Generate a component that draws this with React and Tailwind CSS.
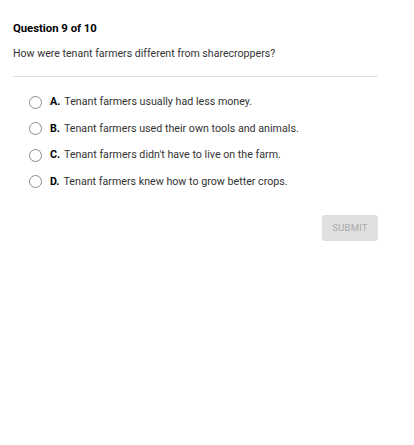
import React from "react";

const options = [
    { letter: "A.", text: "Tenant farmers usually had less money." },
    { letter: "B.", text: "Tenant farmers used their own tools and animals." },
    { letter: "C.", text: "Tenant farmers didn't have to live on the farm." },
    { letter: "D.", text: "Tenant farmers knew how to grow better crops." },
];

export default function App() {
    const [selected, setSelected] = React.useState(null);

    return (
        <div className="w-[414px] h-[445px] bg-white font-['Roboto',sans-serif] text-[#212121]">
            <div className="pl-[13px] pr-[36px] pt-[22px]">
                <div className="text-[11.3px] font-bold leading-[14px] text-black">Question 9 of 10</div>
                <div className="mt-[11px] text-[10.6px] leading-[14px] text-[#333]">
                    How were tenant farmers different from sharecroppers?
                </div>
                <div className="mt-[15px] border-t border-[#e0e0e0]" />

                <div className="mt-[18px] pl-[16px] flex flex-col gap-[12.6px]">
                    {options.map((o, i) => (
                        <label key={o.letter} className="flex items-center h-[14px] cursor-pointer" onClick={() => setSelected(i)}>
                            <span className="w-[13px] h-[13px] rounded-full border border-[#8a8a8a] flex items-center justify-center shrink-0">
                                {selected === i && <span className="w-[7px] h-[7px] rounded-full bg-[#555]" />}
                            </span>
                            <span className="ml-[8px] text-[10.7px] leading-[14px] text-[#333]">
                                <span className="font-bold text-black">{o.letter}</span>
                                <span className="ml-[4px]">{o.text}</span>
                            </span>
                        </label>
                    ))}
                </div>

                <div className="mt-[26px] flex justify-end">
                    <button className="w-[56px] h-[26px] rounded-[3px] bg-[#e0e0e0] text-[#aaaaaa] text-[9.5px] tracking-[0.2px]">
                        SUBMIT
                    </button>
                </div>
            </div>
        </div>
    );
}
